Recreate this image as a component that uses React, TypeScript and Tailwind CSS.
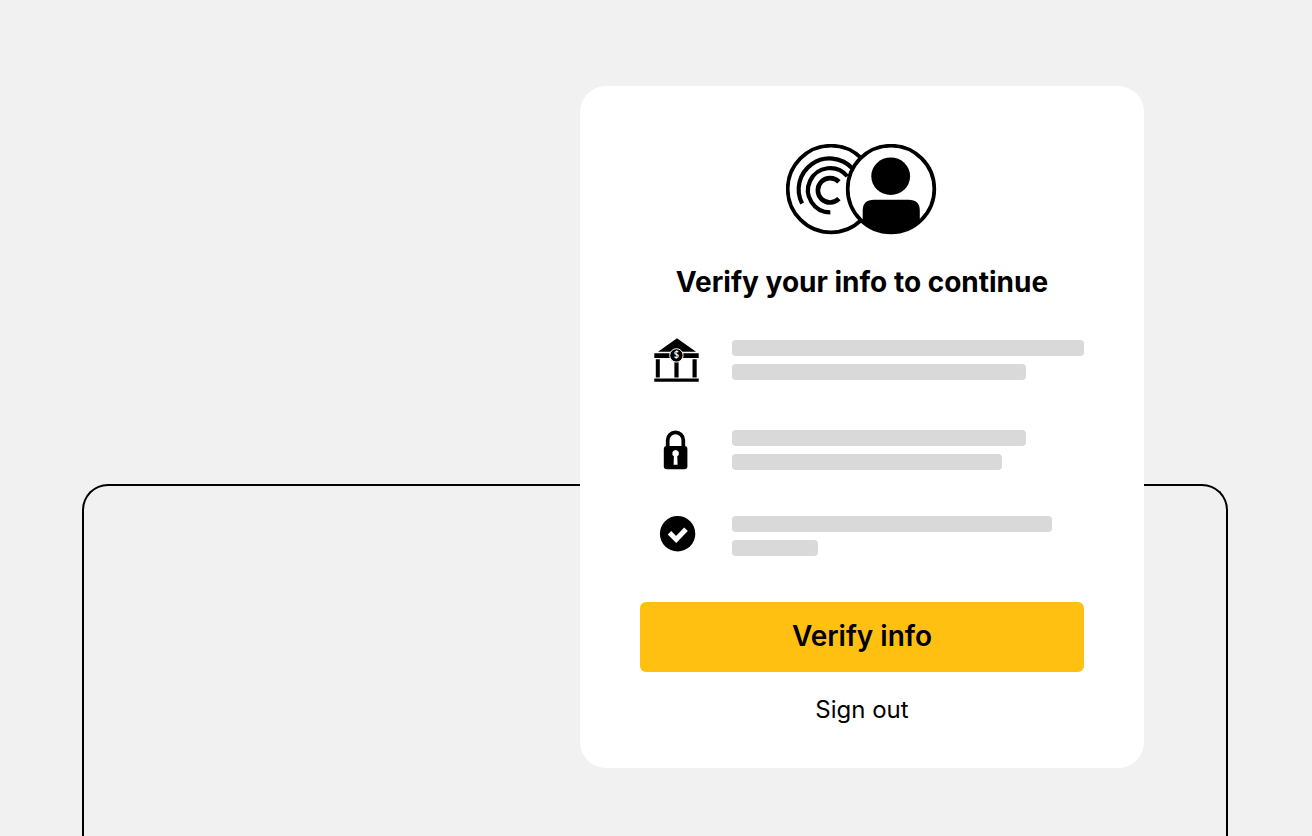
import React from "react";

function ProfileLogo() {
  return (
    <svg viewBox="1 1 152 92" className="h-[92px] w-[152px]" fill="none" stroke="#000" role="img" aria-label="Account">
      <circle cx="46" cy="46" r="43.3" strokeWidth="3.7" />
      <path d="M17.1 60.5A30.9 30.9 0 0 1 66.9 25" strokeWidth="4.2" />
      <path d="M45.3 69.3A22.1 22.1 0 1 1 62.3 33.3" strokeWidth="4.2" />
      <path d="M53.9 55.7A12.2 12.2 0 1 1 53.9 38.9" strokeWidth="4.6" />
      <circle cx="106" cy="46" r="43.3" strokeWidth="3.7" fill="#fff" />
      <ellipse cx="105.7" cy="33.2" rx="19.4" ry="18.8" fill="#000" stroke="none" />
      <path
        d="M77.7 79.5V67.5Q77.7 56.8 89 56.8H123.5Q134.8 56.8 134.8 67.5V79.5A44 44 0 0 1 77.7 79.5Z"
        fill="#000"
        stroke="none"
      />
    </svg>
  );
}

function BankIcon() {
  return (
    <svg viewBox="0 0 48 48" className="size-12 shrink-0" aria-hidden="true">
      <path d="M25 2.2L44 15.8H6ZM2.3 17.2H46.7V22H2.3ZM3.8 23.2H7.8V41.4H3.8ZM22.4 23.2H26.6V41.4H22.4ZM40.5 23.2H44.7V41.4H40.5ZM2.3 42.6H46.7V45.8H2.3Z" />
      <circle cx="24.4" cy="19.4" r="6.7" stroke="#fff" strokeWidth="1" />
      <text x="24.4" y="22.4" textAnchor="middle" fill="#fff" className="font-['Lato',sans-serif] text-[9px] font-bold">$</text>
    </svg>
  );
}

function LockIcon() {
  return (
    <svg viewBox="0 0 48 48" className="size-12 shrink-0" aria-hidden="true">
      <path d="M15.7 22V14.1A7.8 7.8 0 0 1 31.3 14.1V22" fill="none" stroke="#000" strokeWidth="3.7" />
      <rect x="11.8" y="20" width="23.6" height="23.2" rx="3" />
      <path d="M23.6 24A3.4 3.4 0 0 1 25.3 30.3L25.6 38.7H21.6L21.9 30.3A3.4 3.4 0 0 1 23.6 24Z" fill="#fff" />
    </svg>
  );
}

function CheckIcon() {
  return (
    <svg viewBox="0 0 48 48" className="size-12 shrink-0" aria-hidden="true">
      <circle cx="25.6" cy="21.7" r="17.7" />
      <path d="M17.5 20.8L24.2 27.5L34 17.3" fill="none" stroke="#fff" strokeWidth="5" />
    </svg>
  );
}

type ItemProps = { icon: React.ReactNode; first: string; second: string; spacing?: string };

function Item({ icon, first, second, spacing = "" }: ItemProps) {
  return (
    <li className={`flex items-center gap-5 ${spacing}`}>
      <div className="flex w-[72px] shrink-0 justify-center">{icon}</div>
      <div className="flex min-w-0 flex-1 flex-col gap-2">
        <div className={`h-4 max-w-full rounded bg-[#d9d9d9] ${first}`} />
        <div className={`h-4 max-w-full rounded bg-[#d9d9d9] ${second}`} />
      </div>
    </li>
  );
}

export default function App() {
  return (
    <main className="grid min-h-screen bg-[#f1f1f1] font-['Inter',sans-serif] text-black">
      <div className="col-start-1 row-start-1 mt-[484px] mr-[84px] ml-[82px] rounded-t-[26px] border-2 border-b-0 border-black" />
      <section className="col-start-1 row-start-1 mt-[86px] mr-[168px] mb-[68px] flex w-[564px] flex-col self-start justify-self-end rounded-[26px] bg-white px-[60px] pt-[58px] pb-10">
        <div className="flex justify-center">
          <ProfileLogo />
        </div>
        <h1 className="mt-7 text-center text-[28px] leading-9 font-bold whitespace-nowrap">Verify your info to continue</h1>
        <ul className="mt-9 flex flex-col">
          <Item icon={<BankIcon />} first="w-full" second="w-[294px]" />
          <Item icon={<LockIcon />} first="w-[294px]" second="w-[270px]" spacing="mt-[42px]" />
          <Item icon={<CheckIcon />} first="w-[320px]" second="w-[86px]" spacing="mt-[38px]" />
        </ul>
        <button type="button" className="mt-[42px] h-[70px] rounded-md bg-[#ffc012] pb-0.5 text-[28px] font-semibold">
          Verify info
        </button>
        <a href="#sign-out" className="mt-5 self-center text-2xl leading-9">
          Sign out
        </a>
      </section>
    </main>
  );
}
